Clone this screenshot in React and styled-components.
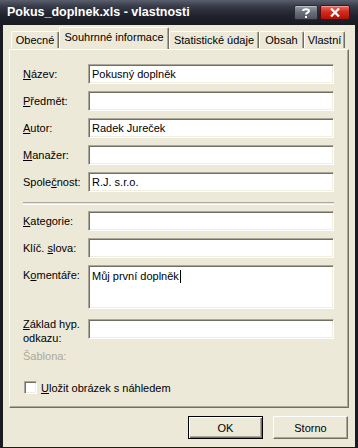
import React from 'react';
import styled, { createGlobalStyle } from 'styled-components';

const Global = createGlobalStyle`
  html, body { margin: 0; padding: 0; background: #1b1c23; }
  body { font-family: "Liberation Sans", Arial, sans-serif; font-size: 11px; }
`;

const Window = styled.div`
  width: 358px;
  height: 448px;
  display: flex;
  flex-direction: column;
  background: #1b1c23;
  overflow: hidden;
`;

const TitleBar = styled.div`
  height: 25px;
  flex: none;
  display: flex;
  align-items: center;
  padding: 0 8px 0 7px;
  background: linear-gradient(#5a5f6e 0%, #383b48 25%, #21232d 60%, #191b23 100%);
  color: #fff;
  font-weight: bold;
  font-size: 12.5px;
`;

const Title = styled.div`
  flex: 1;
  padding-bottom: 1px;
`;

const CapButton = styled.div`
  width: ${p => p.$w}px;
  height: 15px;
  margin-left: ${p => p.$ml}px;
  border-radius: 2px;
  border: 1px solid ${p => (p.$red ? '#5a0c0c' : '#2a2c34')};
  box-sizing: border-box;
  display: flex;
  align-items: center;
  justify-content: center;
  background: ${p =>
    p.$red
      ? 'linear-gradient(#f06a5e 0%, #d52a1e 45%, #b01208 100%)'
      : 'linear-gradient(#9a9ea8 0%, #6d717c 45%, #50535d 100%)'};
  box-shadow: inset 0 1px 0 rgba(255, 255, 255, 0.35);
`;

const Body = styled.div`
  flex: 1;
  margin: 0 3px 3px;
  background: #ece9d8;
  padding: 2px 6px 8px;
  display: flex;
  flex-direction: column;
`;

const TabRow = styled.div`
  display: flex;
  align-items: flex-end;
  height: 22px;
  padding-left: 2px;
  position: relative;
  z-index: 1;
`;

const Tab = styled.div`
  width: ${p => p.$w}px;
  height: ${p => (p.$active ? 22 : 17)}px;
  margin-bottom: ${p => (p.$active ? 0 : 1)}px;
  box-sizing: border-box;
  background: #ece9d8;
  border-top: 1px solid #fff;
  border-left: 1px solid #fff;
  border-right: 1px solid #716f64;
  box-shadow: inset -1px 0 0 #aca899;
  border-radius: 2px 2px 0 0;
  display: flex;
  align-items: ${p => (p.$active ? 'flex-start' : 'center')};
  padding-top: ${p => (p.$active ? 3 : 0)}px;
  justify-content: center;
  color: #000;
`;

const Panel = styled.div`
  height: 359px;
  box-sizing: border-box;
  border-top: 1px solid #fff;
  border-left: 1px solid #fff;
  border-right: 1px solid #716f64;
  border-bottom: 1px solid #716f64;
  box-shadow: inset -1px -1px 0 #aca899;
  padding: 14px 14px 0 13px;
  display: flex;
  flex-direction: column;
`;

const Row = styled.div`
  display: flex;
  align-items: ${p => (p.$top ? 'flex-start' : 'center')};
  margin-top: ${p => p.$mt || 0}px;
`;

const Label = styled.div`
  width: 65px;
  flex: none;
  color: ${p => (p.$disabled ? '#aca899' : '#000')};
  margin-top: ${p => p.$off || 0}px;
`;

const Line = styled.div`
  line-height: 14px;
`;

const U = styled.span`
  text-decoration: underline;
`;

const Field = styled.div`
  flex: 1;
  height: ${p => p.$h || 20}px;
  box-sizing: border-box;
  background: #fff;
  border-top: 1px solid #aca899;
  border-left: 1px solid #aca899;
  border-right: 1px solid #fff;
  border-bottom: 1px solid #fff;
  box-shadow: inset 1px 1px 0 #716f64, inset -1px -1px 0 #f1efe2;
  padding: ${p => (p.$multi ? '4px 3px' : '0 3px')};
  display: flex;
  align-items: ${p => (p.$multi ? 'flex-start' : 'center')};
  color: #000;
  white-space: nowrap;
`;

const Caret = styled.span`
  display: inline-block;
  width: 1px;
  height: 13px;
  background: #000;
  margin-left: 1px;
  vertical-align: -2px;
`;

const Separator = styled.div`
  height: 1px;
  border-top: 1px solid #aca899;
  border-bottom: 1px solid #fff;
  margin-top: ${p => p.$mt}px;
`;

const Check = styled.div`
  width: 13px;
  height: 13px;
  box-sizing: border-box;
  background: #fff;
  border-top: 1px solid #aca899;
  border-left: 1px solid #aca899;
  border-right: 1px solid #fff;
  border-bottom: 1px solid #fff;
  box-shadow: inset 1px 1px 0 #716f64, inset -1px -1px 0 #f1efe2;
  margin: 0 4px 0 1px;
`;

const Footer = styled.div`
  display: flex;
  justify-content: flex-end;
  gap: 10px;
  margin-top: 8px;
  padding-right: 1px;
`;

const Button = styled.div`
  width: 75px;
  height: 23px;
  box-sizing: border-box;
  display: flex;
  align-items: center;
  justify-content: center;
  color: #000;
  background: #ece9d8;
  border: 1px solid;
  border-color: ${p => (p.$default ? '#000' : '#fff #716f64 #716f64 #fff')};
  box-shadow: ${p =>
    p.$default
      ? 'inset 1px 1px 0 #fff, inset -1px -1px 0 #716f64, inset -2px -2px 0 #aca899'
      : 'inset -1px -1px 0 #aca899'};
`;

const fields = [
  { label: <><U>N</U>ázev:</>, value: 'Pokusný doplněk' },
  { label: <><U>P</U>ředmět:</>, value: '' },
  { label: <><U>A</U>utor:</>, value: 'Radek Jureček' },
  { label: <><U>M</U>anažer:</>, value: '' },
  { label: <>Spole<U>č</U>nost:</>, value: 'R.J. s.r.o.' },
];

const tabs = [
  { t: 'Obecné', w: 48 },
  { t: 'Souhrnné informace', w: 110, active: true },
  { t: 'Statistické údaje', w: 90 },
  { t: 'Obsah', w: 45 },
  { t: 'Vlastní', w: 41 },
];

export default function App() {
  return (
    <Window>
      <Global />
      <TitleBar>
        <Title>Pokus_doplnek.xls - vlastnosti</Title>
        <CapButton $w={24} $ml={0}>
          <svg width="8" height="10" viewBox="0 0 8 10">
            <path d="M1 3 C1 0.6 7 0.6 7 3 C7 4.6 4 4.6 4 6.5" stroke="#fff" strokeWidth="2" fill="none" />
            <rect x="3" y="8" width="2" height="2" fill="#fff" />
          </svg>
        </CapButton>
        <CapButton $w={30} $ml={2} $red>
          <svg width="10" height="9" viewBox="0 0 10 9">
            <path d="M1 0.5 L9 8.5 M9 0.5 L1 8.5" stroke="#fff" strokeWidth="2.2" />
          </svg>
        </CapButton>
      </TitleBar>
      <Body>
        <TabRow>
          {tabs.map(tab => (
            <Tab key={tab.t} $w={tab.w} $active={tab.active}>{tab.t}</Tab>
          ))}
        </TabRow>
        <Panel>
          {fields.map((f, i) => (
            <Row key={i} $mt={i === 0 ? 0 : 7}>
              <Label>{f.label}</Label>
              <Field>{f.value}</Field>
            </Row>
          ))}
          <Separator $mt={10} />
          <Row $mt={6}>
            <Label><U>K</U>ategorie:</Label>
            <Field />
          </Row>
          <Row $mt={7}>
            <Label>Klíč. <U>s</U>lova:</Label>
            <Field />
          </Row>
          <Row $mt={7} $top>
            <Label $off={4}>K<U>o</U>mentáře:</Label>
            <Field $h={44} $multi>Můj první doplněk<Caret /></Field>
          </Row>
          <Row $mt={10} $top>
            <Label $off={-2}>
              <Line><U>Z</U>áklad hyp.</Line>
              <Line>odkazu:</Line>
            </Label>
            <Field />
          </Row>
          <Row $mt={5}>
            <Label $disabled>Šablona:</Label>
          </Row>
          <Row $mt={19}>
            <Check />
            <span><U>U</U>ložit obrázek s náhledem</span>
          </Row>
        </Panel>
        <Footer>
          <Button $default>OK</Button>
          <Button>Storno</Button>
        </Footer>
      </Body>
    </Window>
  );
}
